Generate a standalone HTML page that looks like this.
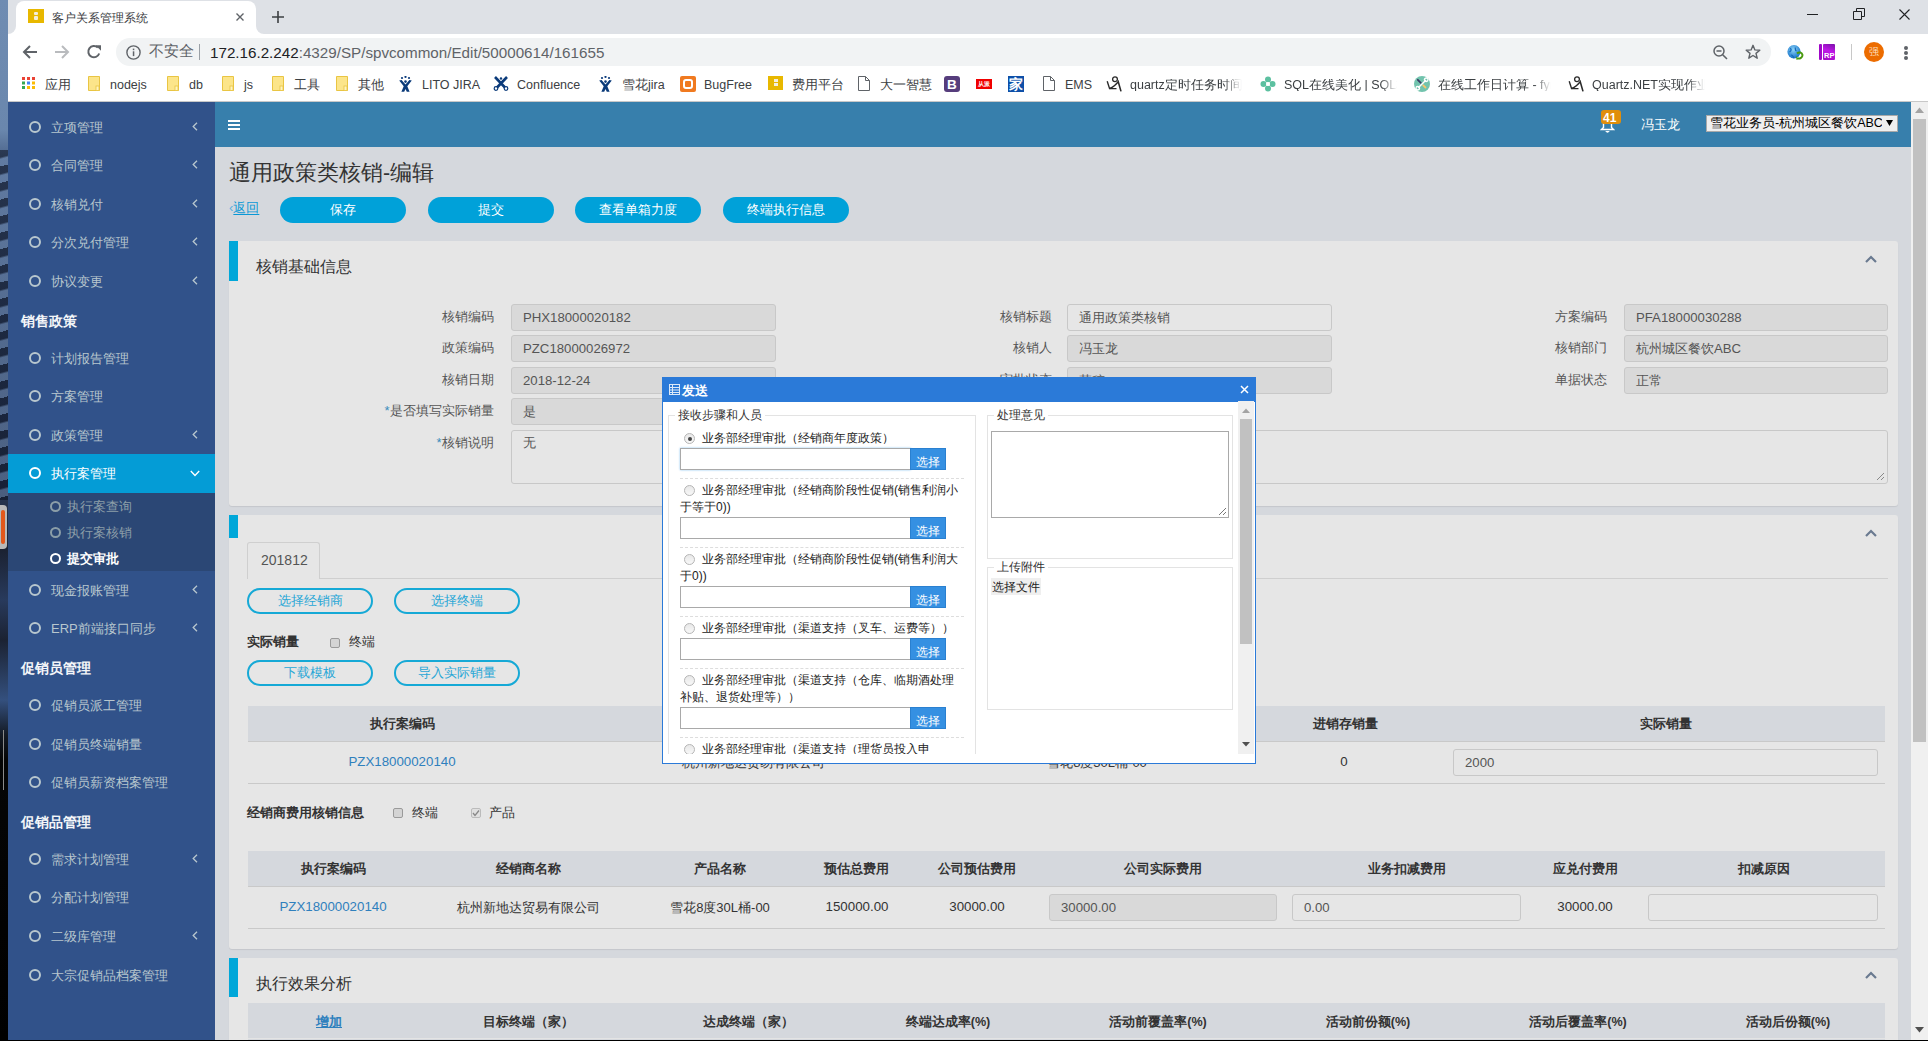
<!DOCTYPE html>
<html><head><meta charset="utf-8">
<style>
*{box-sizing:border-box;margin:0;padding:0}
html,body{width:1928px;height:1041px;overflow:hidden;background:#000}
body{position:relative;font-family:"Liberation Sans",sans-serif;color:#333}
.a{position:absolute}
.t{position:absolute;white-space:nowrap;line-height:1}
/* desktop */
#desk{left:0;top:0;width:8px;height:1041px;background:linear-gradient(180deg,#6f8cb2 0px,#6a87ad 130px,#4a6288 160px,#34486a 330px,#2a3a58 480px,#1b2232 550px,#283a5c 600px,#1b2232 640px,#34507e 700px,#141a24 735px,#050505 760px,#000 1041px)}
/* chrome */
#tabs{left:8px;top:0;width:1920px;height:34px;background:#dee1e6}
#tab{left:16px;top:1px;width:240px;height:33px;background:#fff;border-radius:8px 8px 0 0}
#flL{left:8px;top:26px;width:8px;height:8px;background:#fff}
#flL div{width:8px;height:8px;background:#dee1e6;border-bottom-right-radius:8px}
#flR{left:256px;top:26px;width:8px;height:8px;background:#fff}
#flR div{width:8px;height:8px;background:#dee1e6;border-bottom-left-radius:8px}
#toolbar{left:8px;top:34px;width:1920px;height:67px;background:#fff}
#sep{left:8px;top:101px;width:1920px;height:1px;background:#c8c8c8}
#omni{left:116px;top:38px;width:1655px;height:28px;background:#f1f3f4;border-radius:14px}
.bm{font-size:12.5px;color:#3c4043;top:78.5px}
/* page */
#page{left:8px;top:102px;width:1920px;height:938px;background:#d5d8dd;overflow:hidden}
#sidebar{left:8px;top:102px;width:207px;height:938px;background:#31528a}
#header{left:215px;top:102px;width:1696px;height:45px;background:#377fac}
#vscroll{left:1911px;top:102px;width:17px;height:938px;background:#f0f0f0}
#bottomline{left:0;top:1040px;width:1928px;height:1px;background:#000}

.panel{position:absolute;left:229px;width:1669px;background:#e6e6e6;border-radius:3px;box-shadow:0 1px 1px rgba(0,0,0,.08)}
.acc{position:absolute;left:229px;width:9px;background:#00a7d9}
.ptitle{position:absolute;white-space:nowrap;line-height:1;font-size:16px;color:#333}
.pbtn{position:absolute;top:197px;width:126px;height:26px;border-radius:13px;background:#00a1d9;color:#fff;font-size:13px;text-align:center;line-height:25.5px}
.lbl{position:absolute;white-space:nowrap;line-height:1;font-size:13px;color:#555;text-align:right}
.inp{position:absolute;height:27px;border:1px solid #c8c8c8;border-radius:3px;background:#d9d9d9;font-size:13.2px;color:#555;padding-left:11px;line-height:25px;white-space:nowrap}
.inpw{background:#e6e6e6}
.obtn{position:absolute;width:126px;height:26px;border:2px solid #16a9d6;border-radius:13px;color:#28a6d6;font-size:13px;text-align:center;line-height:22px}
.th{position:absolute;height:36px;background:#d5d8dd}
.thx{margin-top:1.5px;position:absolute;white-space:nowrap;line-height:1;font-size:12.6px;font-weight:bold;color:#333;transform:translateX(-50%)}
.tdx{position:absolute;white-space:nowrap;line-height:1;font-size:13.3px;color:#333;transform:translateX(-50%)}
.hl{position:absolute;height:1px;background:#c9c9c9}
.chev{position:absolute}

.mfs{position:absolute;border:1px solid #e3e3e3}
.mleg{position:absolute;white-space:nowrap;line-height:1;font-size:12px;color:#333;background:#fff;padding:0 3px}
.rad{position:absolute;left:684px;width:11px;height:11px;border-radius:50%;border:1px solid #b5b5b5;background:linear-gradient(#e8e8e8,#f8f8f8)}
.mtx{position:absolute;white-space:nowrap;line-height:1;font-size:12px;color:#222}
.minp{position:absolute;left:680px;width:231px;height:22px;border:1px solid #a9a9a9;background:#fff}
.msel{position:absolute;left:910px;width:36px;height:22px;background:#3590e2;color:#fff;font-size:12px;line-height:1;text-align:center;padding-top:7px;border:1px solid #2a80d0}
.mdash{position:absolute;left:680px;width:284px;height:0;border-top:1px dashed #ddd}
</style></head><body>
<div id="desk" class="a"></div>
<div class="a" style="left:0;top:150px;width:8px;height:350px;background:repeating-linear-gradient(165deg,rgba(10,15,30,.55) 0px,rgba(10,15,30,.55) 7px,rgba(140,170,210,.35) 9px,rgba(140,170,210,.35) 16px)"></div>
<div class="a" style="left:0;top:505px;width:7px;height:44px;background:#b9b9b9;border-radius:0 4px 4px 0"></div>
<div class="a" style="left:1px;top:510px;width:4px;height:34px;background:#e2581c;border-radius:2px"></div>
<div class="a" style="left:3px;top:730px;width:1px;height:60px;background:#8a8a8a"></div>

<div id="tabs" class="a"></div>
<div id="tab" class="a"></div><div id="flL" class="a"><div></div></div><div id="flR" class="a"><div></div></div>
<div id="toolbar" class="a"></div>
<div id="sep" class="a"></div>
<div id="omni" class="a"></div>

<!-- tab contents -->
<div class="a" style="left:28px;top:9px;width:16px;height:14px;background:#e8b800"></div>
<div class="a" style="left:34px;top:11.5px;width:4px;height:3.5px;background:#f4eedd;border-radius:1px"></div><div class="a" style="left:34px;top:16px;width:4px;height:3.5px;background:#f4eedd;border-radius:1px"></div>
<div class="t" style="left:52px;top:12px;font-size:12px;color:#3c4043">客户关系管理系统</div>
<svg class="a" style="left:236px;top:13px" width="8" height="8" viewBox="0 0 8 8"><path d="M0.5 0.5L7.5 7.5M7.5 0.5L0.5 7.5" stroke="#5f6368" stroke-width="1.4"/></svg>
<svg class="a" style="left:272px;top:11px" width="12" height="12" viewBox="0 0 12 12"><path d="M6 0V12M0 6H12" stroke="#3c4043" stroke-width="1.6"/></svg>
<!-- window controls -->
<div class="a" style="left:1807px;top:14px;width:11px;height:1px;background:#202124"></div>
<svg class="a" style="left:1853px;top:8px" width="12" height="12" viewBox="0 0 12 12"><path d="M0.5 3.5H8.5V11.5H0.5Z M3.5 3.5V0.5H11.5V8.5H8.5" fill="none" stroke="#202124" stroke-width="1"/></svg>
<svg class="a" style="left:1899px;top:9px" width="11" height="11" viewBox="0 0 11 11"><path d="M0.5 0.5L10.5 10.5M10.5 0.5L0.5 10.5" stroke="#202124" stroke-width="1.1"/></svg>
<!-- nav -->
<svg class="a" style="left:22px;top:44px" width="16" height="16" viewBox="0 0 16 16"><path d="M15 8H2M8 2L2 8L8 14" fill="none" stroke="#5f6368" stroke-width="2"/></svg>
<svg class="a" style="left:54px;top:44px" width="16" height="16" viewBox="0 0 16 16"><path d="M1 8H14M8 2L14 8L8 14" fill="none" stroke="#b9bbbe" stroke-width="2"/></svg>
<svg class="a" style="left:86px;top:44px" width="16" height="16" viewBox="0 0 16 16"><path d="M13.2 9.5A5.6 5.6 0 1 1 11.8 3.6" fill="none" stroke="#5f6368" stroke-width="2"/><path d="M9.5 1.2H15V6.7Z" fill="#5f6368"/></svg>
<!-- omnibox -->
<svg class="a" style="left:126px;top:45px" width="15" height="15" viewBox="0 0 15 15"><circle cx="7.5" cy="7.5" r="6.6" fill="none" stroke="#5f6368" stroke-width="1.4"/><rect x="6.8" y="6.3" width="1.5" height="4.8" fill="#5f6368"/><rect x="6.8" y="3.6" width="1.5" height="1.6" fill="#5f6368"/></svg>
<div class="t" style="left:149px;top:44px;font-size:14.5px;color:#5f6368">不安全</div>
<div class="a" style="left:199px;top:44px;width:1px;height:16px;background:#9aa0a6"></div>
<div class="t" style="left:210px;top:44.5px;font-size:15.2px;color:#202124">172.16.2.242<span style="color:#5f6368">:4329/SP/spvcommon/Edit/50000614/161655</span></div>
<svg class="a" style="left:1713px;top:45px" width="15" height="15" viewBox="0 0 15 15"><circle cx="6" cy="6" r="5" fill="none" stroke="#5f6368" stroke-width="1.5"/><path d="M3.5 6H8.5M9.7 9.7L14 14" stroke="#5f6368" stroke-width="1.6"/></svg>
<svg class="a" style="left:1745px;top:44px" width="16" height="16" viewBox="0 0 16 16"><path d="M8 1.3L9.9 5.9L14.8 6.2L11 9.4L12.2 14.2L8 11.5L3.8 14.2L5 9.4L1.2 6.2L6.1 5.9Z" fill="none" stroke="#5f6368" stroke-width="1.4" stroke-linejoin="round"/></svg>
<!-- extensions -->
<svg class="a" style="left:1787px;top:45px" width="17" height="15" viewBox="0 0 17 15"><defs><radialGradient id="gg" cx="0.45" cy="0.35" r="0.6"><stop offset="0" stop-color="#8fd4f8"/><stop offset="1" stop-color="#1a78cc"/></radialGradient></defs><ellipse cx="7" cy="6.8" rx="6.6" ry="6.8" fill="url(#gg)"/><path d="M3 3.5C5 4 4 6 2.5 7M8 2.5C9 4 7.5 5 9.5 6M4 10C6 10 6 12 7 13" stroke="#1468b8" stroke-width="1.2" fill="none"/><path d="M10 8.5C12 6.5 15 7.5 15.5 10C15.5 12.5 13 14 10.5 13.5" fill="none" stroke="#4a9a10" stroke-width="2"/><path d="M9 11L11.5 13.8L9.5 15Z" fill="#4a9a10"/></svg>
<div class="a" style="left:1819px;top:44px;width:3px;height:16px;background:#a008c8;border-radius:1px"></div><div class="a" style="left:1823px;top:44px;width:12px;height:16px;background:linear-gradient(200deg,#7a10a8 0%,#c018e8 45%,#a008c0 100%);border-radius:1px"></div>
<div class="t" style="left:1824px;top:52px;font-size:7.5px;font-weight:bold;color:#fff">RP</div>
<div class="a" style="left:1851px;top:44px;width:1px;height:16px;background:#c8c8c8"></div>
<div class="a" style="left:1864px;top:42px;width:20px;height:20px;border-radius:50%;background:#ec6c00"></div>
<div class="t" style="left:1869px;top:47px;font-size:10px;color:#fde0c0">强</div>
<div class="a" style="left:1904px;top:46px;width:4px;height:4px;border-radius:50%;background:#5f6368"></div>
<div class="a" style="left:1904px;top:51px;width:4px;height:4px;border-radius:50%;background:#5f6368"></div>
<div class="a" style="left:1904px;top:56px;width:4px;height:4px;border-radius:50%;background:#5f6368"></div>
<!-- bookmarks -->
<svg class="a" style="left:22px;top:77px" width="14" height="12" viewBox="0 0 14 12"><rect x="0" y="0" width="3" height="3" fill="#ea4335"/><rect x="5" y="0" width="3" height="3" fill="#ea4335"/><rect x="10" y="0" width="3" height="3" fill="#ea4335"/><rect x="0" y="4.5" width="3" height="3" fill="#34a853"/><rect x="5" y="4.5" width="3" height="3" fill="#4285f4"/><rect x="10" y="4.5" width="3" height="3" fill="#fbbc05"/><rect x="0" y="9" width="3" height="3" fill="#34a853"/><rect x="5" y="9" width="3" height="3" fill="#fbbc05"/><rect x="10" y="9" width="3" height="3" fill="#fbbc05"/></svg>
<div class="t bm" style="left:45px">应用</div>
<svg class="a" style="left:88px;top:76px" width="12" height="15" viewBox="0 0 12 15"><path d="M0.5 0.5H11.5V14.5H0.5Z" fill="#fce58a" stroke="#e9c543"/><rect x="8" y="10" width="3" height="4.5" fill="#fff4c0" stroke="#e9c543" stroke-width="0.8"/></svg>
<div class="t bm" style="left:110px">nodejs</div>
<svg class="a" style="left:167px;top:76px" width="12" height="15" viewBox="0 0 12 15"><path d="M0.5 0.5H11.5V14.5H0.5Z" fill="#fce58a" stroke="#e9c543"/><rect x="8" y="10" width="3" height="4.5" fill="#fff4c0" stroke="#e9c543" stroke-width="0.8"/></svg>
<div class="t bm" style="left:189px">db</div>
<svg class="a" style="left:222px;top:76px" width="12" height="15" viewBox="0 0 12 15"><path d="M0.5 0.5H11.5V14.5H0.5Z" fill="#fce58a" stroke="#e9c543"/><rect x="8" y="10" width="3" height="4.5" fill="#fff4c0" stroke="#e9c543" stroke-width="0.8"/></svg>
<div class="t bm" style="left:244px">js</div>
<svg class="a" style="left:272px;top:76px" width="12" height="15" viewBox="0 0 12 15"><path d="M0.5 0.5H11.5V14.5H0.5Z" fill="#fce58a" stroke="#e9c543"/><rect x="8" y="10" width="3" height="4.5" fill="#fff4c0" stroke="#e9c543" stroke-width="0.8"/></svg>
<div class="t bm" style="left:294px">工具</div>
<svg class="a" style="left:336px;top:76px" width="12" height="15" viewBox="0 0 12 15"><path d="M0.5 0.5H11.5V14.5H0.5Z" fill="#fce58a" stroke="#e9c543"/><rect x="8" y="10" width="3" height="4.5" fill="#fff4c0" stroke="#e9c543" stroke-width="0.8"/></svg>
<div class="t bm" style="left:358px">其他</div>

<svg class="a" style="left:399px;top:76px" width="13" height="16" viewBox="0 0 13 16"><g fill="#0a3a7a"><circle cx="3" cy="2" r="1.1"/><circle cx="6.5" cy="0.9" r="1.1"/><circle cx="10" cy="2" r="1.1"/><circle cx="6.5" cy="5.6" r="1.3"/><path d="M0.2 4.5L2.6 4L6.5 8.6L10.4 4L12.8 4.5L8.3 10.2L10.6 15.8H7.8L6.5 13L5.2 15.8H2.4L4.7 10.2Z"/></g></svg>
<div class="t bm" style="left:422px">LITO JIRA</div>
<svg class="a" style="left:493px;top:76px" width="16" height="15" viewBox="0 0 16 15"><g fill="none" stroke="#0a3a7a"><path d="M2 1L12 11.5M14 1L4 11.5" stroke-width="2.6"/><circle cx="3" cy="12.5" r="1.8" stroke-width="1.2"/><circle cx="13" cy="12.5" r="1.8" stroke-width="1.2"/></g><circle cx="8" cy="2.5" r="1.2" fill="#0a3a7a"/></svg>
<div class="t bm" style="left:517px">Confluence</div>
<svg class="a" style="left:599px;top:76px" width="13" height="16" viewBox="0 0 13 16"><g fill="#0a3a7a"><circle cx="3" cy="2" r="1.1"/><circle cx="6.5" cy="0.9" r="1.1"/><circle cx="10" cy="2" r="1.1"/><circle cx="6.5" cy="5.6" r="1.3"/><path d="M0.2 4.5L2.6 4L6.5 8.6L10.4 4L12.8 4.5L8.3 10.2L10.6 15.8H7.8L6.5 13L5.2 15.8H2.4L4.7 10.2Z"/></g></svg>
<div class="t bm" style="left:622px">雪花jira</div>
<div class="a" style="left:680px;top:76px;width:16px;height:16px;background:#f07a20;border-radius:2px"></div>
<div class="a" style="left:683px;top:79px;width:10px;height:10px;border:2px solid #fff;border-radius:3px"></div>
<div class="t bm" style="left:704px">BugFree</div>
<div class="a" style="left:768px;top:76px;width:15px;height:14px;background:#e8b800"></div><div class="a" style="left:774px;top:79px;width:3.5px;height:3px;background:#f4eedd"></div><div class="a" style="left:774px;top:83px;width:3.5px;height:3px;background:#f4eedd"></div>
<div class="t bm" style="left:792px">费用平台</div>
<svg class="a" style="left:858px;top:76px" width="12" height="15" viewBox="0 0 12 15"><path d="M0.5 0.5H7.5L11.5 4.5V14.5H0.5Z M7.5 0.5V4.5H11.5" fill="#fff" stroke="#5f6368"/></svg>
<div class="t bm" style="left:880px">大一智慧</div>
<div class="a" style="left:944px;top:76px;width:16px;height:16px;background:#563d7c;border-radius:3px"></div>
<div class="t" style="left:947px;top:78px;font-size:13.5px;font-weight:bold;color:#fff">B</div>
<div class="a" style="left:976px;top:79px;width:16px;height:10px;background:#f00000"></div><div class="t" style="left:978px;top:80.5px;font-size:6px;font-weight:bold;color:#fff">从派</div>
<div class="a" style="left:1008px;top:76px;width:16px;height:16px;background:#0d4fa8"></div>
<div class="t" style="left:1009px;top:77px;font-size:14px;font-weight:bold;color:#fff">家</div>
<svg class="a" style="left:1043px;top:76px" width="12" height="15" viewBox="0 0 12 15"><path d="M0.5 0.5H7.5L11.5 4.5V14.5H0.5Z M7.5 0.5V4.5H11.5" fill="#fff" stroke="#5f6368"/></svg>
<div class="t bm" style="left:1065px">EMS</div>
<svg class="a" style="left:1106px;top:76px" width="16" height="16" viewBox="0 0 16 16"><g fill="none" stroke="#2a2a2a"><circle cx="9" cy="3.2" r="2.4" stroke-width="1.3"/><path d="M1.2 5.2L3.6 12.6L10.5 12.6" stroke-width="1.4"/><path d="M3.6 12.4C7 11.2 10 8.8 12.2 5.6L15 15.4" stroke-width="1.6"/></g></svg>
<div class="t bm" style="left:1130px;width:112px;overflow:hidden;-webkit-mask-image:linear-gradient(90deg,#000 85%,transparent)">quartz定时任务时间表达</div>
<svg class="a" style="left:1260px;top:76px" width="16" height="16" viewBox="0 0 16 16"><g fill="#5cc0a0"><circle cx="8" cy="3.5" r="3"/><circle cx="8" cy="12.5" r="3"/><circle cx="3.5" cy="8" r="3"/><circle cx="12.5" cy="8" r="3"/></g><circle cx="8" cy="8" r="2" fill="#fff"/></svg>
<div class="t bm" style="left:1284px;width:113px;overflow:hidden;-webkit-mask-image:linear-gradient(90deg,#000 85%,transparent)">SQL在线美化 | SQL格式化</div>
<svg class="a" style="left:1414px;top:76px" width="16" height="16" viewBox="0 0 16 16"><circle cx="8" cy="8" r="8" fill="#72c3ad"/><path d="M3.8 3.8L6.8 6.8" stroke="#3a3a66" stroke-width="1.8" stroke-linecap="round"/><path d="M8.8 8.8L12 12" stroke="#f7c56b" stroke-width="1.8"/><path d="M4 12L12 4" stroke="#fff" stroke-width="1.5"/><circle cx="12.2" cy="3.8" r="1.8" fill="none" stroke="#fff" stroke-width="1.3"/><circle cx="3.8" cy="12.2" r="1.8" fill="none" stroke="#fff" stroke-width="1.3"/></svg>
<div class="t bm" style="left:1438px;width:113px;overflow:hidden;-webkit-mask-image:linear-gradient(90deg,#000 85%,transparent)">在线工作日计算 - fynas</div>
<svg class="a" style="left:1568px;top:76px" width="16" height="16" viewBox="0 0 16 16"><g fill="none" stroke="#2a2a2a"><circle cx="9" cy="3.2" r="2.4" stroke-width="1.3"/><path d="M1.2 5.2L3.6 12.6L10.5 12.6" stroke-width="1.4"/><path d="M3.6 12.4C7 11.2 10 8.8 12.2 5.6L15 15.4" stroke-width="1.6"/></g></svg>
<div class="t bm" style="left:1592px;width:113px;overflow:hidden;-webkit-mask-image:linear-gradient(90deg,#000 85%,transparent)">Quartz.NET实现作业调度</div>


<div id="page" class="a"></div>
<div id="sidebar" class="a"></div>

<div class="t" style="left:229px;top:163px;font-size:21.5px;color:#333">通用政策类核销-编辑</div>
<div class="t" style="left:229px;top:200px;font-size:13px;color:#0a98d6;line-height:15px"><span style="color:#5ab0e0">‹</span><span style="text-decoration:underline;text-underline-offset:2px;text-decoration-thickness:1.3px">返回</span></div>
<div class="pbtn" style="left:280px">保存</div>
<div class="pbtn" style="left:428px">提交</div>
<div class="pbtn" style="left:575px">查看单箱力度</div>
<div class="pbtn" style="left:723px">终端执行信息</div>

<!-- panel 1 -->
<div class="panel" style="top:241px;height:265px"></div>
<div class="acc" style="top:241px;height:40px"></div>
<div class="ptitle" style="left:256px;top:259px">核销基础信息</div>
<svg class="chev" style="left:1865px;top:255px" width="12" height="8" viewBox="0 0 12 8"><path d="M1 7L6 2L11 7" fill="none" stroke="#6a7a90" stroke-width="2.2"/></svg>

<div class="lbl" style="right:1434.5px;top:310px">核销编码</div>
<div class="inp" style="left:511px;top:304px;width:265px">PHX18000020182</div>
<div class="lbl" style="right:1434.5px;top:341px">政策编码</div>
<div class="inp" style="left:511px;top:335px;width:265px">PZC18000026972</div>
<div class="lbl" style="right:1434.5px;top:373px">核销日期</div>
<div class="inp" style="left:511px;top:367px;width:265px">2018-12-24</div>
<div class="lbl" style="right:1434.5px;top:404px"><span style="color:#3c8dbc">*</span>是否填写实际销量</div>
<div class="inp" style="left:511px;top:398px;width:265px">是</div>
<div class="lbl" style="right:1434.5px;top:436px"><span style="color:#3c8dbc">*</span>核销说明</div>
<div class="inp inpw" style="left:511px;top:430px;width:1377px;height:54px;line-height:24px">无</div>
<svg class="a" style="left:1876px;top:472px" width="9" height="9" viewBox="0 0 9 9"><path d="M8 1L1 8M8 5L5 8" stroke="#888" stroke-width="1"/></svg>

<div class="lbl" style="right:876.5px;top:310px">核销标题</div>
<div class="inp inpw" style="left:1067px;top:304px;width:265px">通用政策类核销</div>
<div class="lbl" style="right:876.5px;top:341px">核销人</div>
<div class="inp" style="left:1067px;top:335px;width:265px">冯玉龙</div>
<div class="lbl" style="right:876.5px;top:373px">审批状态</div>
<div class="inp" style="left:1067px;top:367px;width:265px">草稿</div>

<div class="lbl" style="right:321px;top:310px">方案编码</div>
<div class="inp" style="left:1624px;top:304px;width:264px">PFA18000030288</div>
<div class="lbl" style="right:321px;top:341px">核销部门</div>
<div class="inp" style="left:1624px;top:335px;width:264px">杭州城区餐饮ABC</div>
<div class="lbl" style="right:321px;top:373px">单据状态</div>
<div class="inp" style="left:1624px;top:367px;width:264px">正常</div>

<!-- panel 2 -->
<div class="panel" style="top:515px;height:434px"></div>
<div class="acc" style="top:515px;height:23px"></div>
<svg class="chev" style="left:1865px;top:529px" width="12" height="8" viewBox="0 0 12 8"><path d="M1 7L6 2L11 7" fill="none" stroke="#6a7a90" stroke-width="2.2"/></svg>
<div class="a" style="left:247px;top:542px;width:73px;height:37px;border:1px solid #cfcfcf;border-bottom:none;border-radius:3px 3px 0 0;background:#e6e6e6"></div>
<div class="t" style="left:261px;top:553px;font-size:14px;color:#555">201812</div>
<div class="hl" style="left:320px;top:578px;width:1568px;background:#cfcfcf"></div>
<div class="obtn" style="left:247px;top:588px">选择经销商</div>
<div class="obtn" style="left:394px;top:588px">选择终端</div>
<div class="t" style="left:247px;top:635px;font-size:13px;font-weight:bold;color:#333">实际销量</div>
<div class="a" style="left:330px;top:638px;width:10px;height:10px;border:1px solid #9a9a9a;border-radius:2px;background:#d4d4d4"></div>
<div class="t" style="left:349px;top:635px;font-size:13px;color:#333">终端</div>
<div class="obtn" style="left:247px;top:660px">下载模板</div>
<div class="obtn" style="left:394px;top:660px">导入实际销量</div>

<div class="th" style="left:248px;top:706px;width:1637px"></div>
<div class="thx" style="left:402px;top:716px">执行案编码</div>
<div class="thx" style="left:752px;top:716px">经销商名称</div>
<div class="thx" style="left:1096px;top:716px">产品名称</div>
<div class="thx" style="left:1345px;top:716px">进销存销量</div>
<div class="thx" style="left:1666px;top:716px">实际销量</div>
<div class="hl" style="left:248px;top:741px;width:1637px"></div>
<div class="tdx" style="left:402px;top:755px;color:#2f80bd">PZX18000020140</div>
<div class="tdx" style="left:753px;top:756px;font-size:13px">杭州新地达贸易有限公司</div>
<div class="tdx" style="left:1097px;top:756px;font-size:13px">雪花8度30L桶-00</div>
<div class="tdx" style="left:1344px;top:755px">0</div>
<div class="inp inpw" style="left:1453px;top:749px;width:425px;height:27px">2000</div>
<div class="hl" style="left:248px;top:783px;width:1637px"></div>

<div class="t" style="left:247px;top:806px;font-size:13px;font-weight:bold;color:#333">经销商费用核销信息</div>
<div class="a" style="left:393px;top:808px;width:10px;height:10px;border:1px solid #9a9a9a;border-radius:2px;background:#d4d4d4"></div>
<div class="t" style="left:412px;top:806px;font-size:13px;color:#333">终端</div>
<div class="a" style="left:471px;top:808px;width:10px;height:10px;border:1px solid #bbb;border-radius:2px;background:#e0e0e0"></div>
<svg class="a" style="left:472px;top:809px" width="8" height="8" viewBox="0 0 8 8"><path d="M1 4L3 6.5L7 1.5" fill="none" stroke="#888" stroke-width="1.3"/></svg>
<div class="t" style="left:489px;top:806px;font-size:13px;color:#333">产品</div>

<div class="th" style="left:248px;top:851px;width:1637px"></div>
<div class="thx" style="left:333px;top:861px">执行案编码</div>
<div class="thx" style="left:528px;top:861px">经销商名称</div>
<div class="thx" style="left:720px;top:861px">产品名称</div>
<div class="thx" style="left:856px;top:861px">预估总费用</div>
<div class="thx" style="left:977px;top:861px">公司预估费用</div>
<div class="thx" style="left:1163px;top:861px">公司实际费用</div>
<div class="thx" style="left:1407px;top:861px">业务扣减费用</div>
<div class="thx" style="left:1585px;top:861px">应兑付费用</div>
<div class="thx" style="left:1764px;top:861px">扣减原因</div>
<div class="hl" style="left:248px;top:886px;width:1637px"></div>
<div class="tdx" style="left:333px;top:900px;color:#2f80bd">PZX18000020140</div>
<div class="tdx" style="left:528px;top:901px;font-size:13px">杭州新地达贸易有限公司</div>
<div class="tdx" style="left:720px;top:901px;font-size:13px">雪花8度30L桶-00</div>
<div class="tdx" style="left:857px;top:900px">150000.00</div>
<div class="tdx" style="left:977px;top:900px">30000.00</div>
<div class="inp" style="left:1049px;top:894px;width:228px;height:27px">30000.00</div>
<div class="inp inpw" style="left:1292px;top:894px;width:229px;height:27px">0.00</div>
<div class="tdx" style="left:1585px;top:900px">30000.00</div>
<div class="inp inpw" style="left:1648px;top:894px;width:230px;height:27px"></div>
<div class="hl" style="left:248px;top:928px;width:1637px"></div>

<!-- panel 3 -->
<div class="panel" style="top:958px;height:120px"></div>
<div class="acc" style="top:958px;height:39px"></div>
<div class="ptitle" style="left:256px;top:976px">执行效果分析</div>
<svg class="chev" style="left:1865px;top:971px" width="12" height="8" viewBox="0 0 12 8"><path d="M1 7L6 2L11 7" fill="none" stroke="#6a7a90" stroke-width="2.2"/></svg>
<div class="th" style="left:248px;top:1003px;width:1637px;height:40px"></div>
<div class="thx" style="left:329px;top:1014px;color:#2f80bd;font-weight:bold;text-decoration:underline">增加</div>
<div class="thx" style="left:528px;top:1014px">目标终端（家）</div>
<div class="thx" style="left:748px;top:1014px">达成终端（家）</div><div class="hl" style="left:248px;top:1038px;width:1637px;background:#e4e4e4"></div>
<div class="thx" style="left:948px;top:1014px">终端达成率(%)</div>
<div class="thx" style="left:1158px;top:1014px">活动前覆盖率(%)</div>
<div class="thx" style="left:1368px;top:1014px">活动前份额(%)</div>
<div class="thx" style="left:1578px;top:1014px">活动后覆盖率(%)</div>
<div class="thx" style="left:1788px;top:1014px">活动后份额(%)</div>
<div id="header" class="a"></div>
<div class="a" style="left:8px;top:454px;width:207px;height:39px;background:#049cd6"></div>
<div class="a" style="left:8px;top:493px;width:207px;height:78px;background:#2b4775"></div>
<div class="a" style="left:29px;top:121px;width:12px;height:12px;border:2.2px solid #b8c7ce;border-radius:50%"></div>
<div class="t" style="left:51px;top:121px;font-size:13px;color:#b8c7ce">立项管理</div>
<svg class="a" style="left:192px;top:122px" width="6" height="9" viewBox="0 0 6 9"><path d="M5 0.8L1.2 4.5L5 8.2" fill="none" stroke="#b8c7ce" stroke-width="1.3"/></svg>
<div class="a" style="left:29px;top:159px;width:12px;height:12px;border:2.2px solid #b8c7ce;border-radius:50%"></div>
<div class="t" style="left:51px;top:159px;font-size:13px;color:#b8c7ce">合同管理</div>
<svg class="a" style="left:192px;top:160px" width="6" height="9" viewBox="0 0 6 9"><path d="M5 0.8L1.2 4.5L5 8.2" fill="none" stroke="#b8c7ce" stroke-width="1.3"/></svg>
<div class="a" style="left:29px;top:198px;width:12px;height:12px;border:2.2px solid #b8c7ce;border-radius:50%"></div>
<div class="t" style="left:51px;top:198px;font-size:13px;color:#b8c7ce">核销兑付</div>
<svg class="a" style="left:192px;top:199px" width="6" height="9" viewBox="0 0 6 9"><path d="M5 0.8L1.2 4.5L5 8.2" fill="none" stroke="#b8c7ce" stroke-width="1.3"/></svg>
<div class="a" style="left:29px;top:236px;width:12px;height:12px;border:2.2px solid #b8c7ce;border-radius:50%"></div>
<div class="t" style="left:51px;top:236px;font-size:13px;color:#b8c7ce">分次兑付管理</div>
<svg class="a" style="left:192px;top:237px" width="6" height="9" viewBox="0 0 6 9"><path d="M5 0.8L1.2 4.5L5 8.2" fill="none" stroke="#b8c7ce" stroke-width="1.3"/></svg>
<div class="a" style="left:29px;top:275px;width:12px;height:12px;border:2.2px solid #b8c7ce;border-radius:50%"></div>
<div class="t" style="left:51px;top:275px;font-size:13px;color:#b8c7ce">协议变更</div>
<svg class="a" style="left:192px;top:276px" width="6" height="9" viewBox="0 0 6 9"><path d="M5 0.8L1.2 4.5L5 8.2" fill="none" stroke="#b8c7ce" stroke-width="1.3"/></svg>
<div class="t" style="left:21px;top:314px;font-size:14px;font-weight:bold;color:#f4f6f9">销售政策</div>
<div class="a" style="left:29px;top:352px;width:12px;height:12px;border:2.2px solid #b8c7ce;border-radius:50%"></div>
<div class="t" style="left:51px;top:352px;font-size:13px;color:#b8c7ce">计划报告管理</div>
<div class="a" style="left:29px;top:390px;width:12px;height:12px;border:2.2px solid #b8c7ce;border-radius:50%"></div>
<div class="t" style="left:51px;top:390px;font-size:13px;color:#b8c7ce">方案管理</div>
<div class="a" style="left:29px;top:429px;width:12px;height:12px;border:2.2px solid #b8c7ce;border-radius:50%"></div>
<div class="t" style="left:51px;top:429px;font-size:13px;color:#b8c7ce">政策管理</div>
<svg class="a" style="left:192px;top:430px" width="6" height="9" viewBox="0 0 6 9"><path d="M5 0.8L1.2 4.5L5 8.2" fill="none" stroke="#b8c7ce" stroke-width="1.3"/></svg>
<div class="a" style="left:29px;top:467px;width:12px;height:12px;border:2.2px solid #fff;border-radius:50%"></div>
<div class="t" style="left:51px;top:467px;font-size:13px;color:#fff">执行案管理</div>
<div class="a" style="left:50px;top:501px;width:11px;height:11px;border:2px solid #8b9ea8;border-radius:50%"></div>
<div class="t" style="left:67px;top:500px;font-size:13px;font-weight:normal;color:#8b9ea8">执行案查询</div>
<div class="a" style="left:50px;top:527px;width:11px;height:11px;border:2px solid #8b9ea8;border-radius:50%"></div>
<div class="t" style="left:67px;top:526px;font-size:13px;font-weight:normal;color:#8b9ea8">执行案核销</div>
<div class="a" style="left:50px;top:553px;width:11px;height:11px;border:2px solid #fff;border-radius:50%"></div>
<div class="t" style="left:67px;top:552px;font-size:13px;font-weight:bold;color:#fff">提交审批</div>
<div class="a" style="left:29px;top:584px;width:12px;height:12px;border:2.2px solid #b8c7ce;border-radius:50%"></div>
<div class="t" style="left:51px;top:584px;font-size:13px;color:#b8c7ce">现金报账管理</div>
<svg class="a" style="left:192px;top:585px" width="6" height="9" viewBox="0 0 6 9"><path d="M5 0.8L1.2 4.5L5 8.2" fill="none" stroke="#b8c7ce" stroke-width="1.3"/></svg>
<div class="a" style="left:29px;top:622px;width:12px;height:12px;border:2.2px solid #b8c7ce;border-radius:50%"></div>
<div class="t" style="left:51px;top:622px;font-size:13px;color:#b8c7ce">ERP前端接口同步</div>
<svg class="a" style="left:192px;top:623px" width="6" height="9" viewBox="0 0 6 9"><path d="M5 0.8L1.2 4.5L5 8.2" fill="none" stroke="#b8c7ce" stroke-width="1.3"/></svg>
<div class="t" style="left:21px;top:661px;font-size:14px;font-weight:bold;color:#f4f6f9">促销员管理</div>
<div class="a" style="left:29px;top:699px;width:12px;height:12px;border:2.2px solid #b8c7ce;border-radius:50%"></div>
<div class="t" style="left:51px;top:699px;font-size:13px;color:#b8c7ce">促销员派工管理</div>
<div class="a" style="left:29px;top:738px;width:12px;height:12px;border:2.2px solid #b8c7ce;border-radius:50%"></div>
<div class="t" style="left:51px;top:738px;font-size:13px;color:#b8c7ce">促销员终端销量</div>
<div class="a" style="left:29px;top:776px;width:12px;height:12px;border:2.2px solid #b8c7ce;border-radius:50%"></div>
<div class="t" style="left:51px;top:776px;font-size:13px;color:#b8c7ce">促销员薪资档案管理</div>
<div class="t" style="left:21px;top:815px;font-size:14px;font-weight:bold;color:#f4f6f9">促销品管理</div>
<div class="a" style="left:29px;top:853px;width:12px;height:12px;border:2.2px solid #b8c7ce;border-radius:50%"></div>
<div class="t" style="left:51px;top:853px;font-size:13px;color:#b8c7ce">需求计划管理</div>
<svg class="a" style="left:192px;top:854px" width="6" height="9" viewBox="0 0 6 9"><path d="M5 0.8L1.2 4.5L5 8.2" fill="none" stroke="#b8c7ce" stroke-width="1.3"/></svg>
<div class="a" style="left:29px;top:891px;width:12px;height:12px;border:2.2px solid #b8c7ce;border-radius:50%"></div>
<div class="t" style="left:51px;top:891px;font-size:13px;color:#b8c7ce">分配计划管理</div>
<div class="a" style="left:29px;top:930px;width:12px;height:12px;border:2.2px solid #b8c7ce;border-radius:50%"></div>
<div class="t" style="left:51px;top:930px;font-size:13px;color:#b8c7ce">二级库管理</div>
<svg class="a" style="left:192px;top:931px" width="6" height="9" viewBox="0 0 6 9"><path d="M5 0.8L1.2 4.5L5 8.2" fill="none" stroke="#b8c7ce" stroke-width="1.3"/></svg>
<div class="a" style="left:29px;top:969px;width:12px;height:12px;border:2.2px solid #b8c7ce;border-radius:50%"></div>
<div class="t" style="left:51px;top:969px;font-size:13px;color:#b8c7ce">大宗促销品档案管理</div>
<svg class="a" style="left:190px;top:470px" width="10" height="7" viewBox="0 0 10 7"><path d="M0.8 1L5 5.5L9.2 1" fill="none" stroke="#fff" stroke-width="1.4"/></svg>

<svg class="a" style="left:228px;top:120px" width="12" height="10" viewBox="0 0 12 10"><rect x="0" y="0" width="12" height="2" fill="#fff"/><rect x="0" y="4" width="12" height="2" fill="#fff"/><rect x="0" y="8" width="12" height="2" fill="#fff"/></svg>
<svg class="a" style="left:1600px;top:118px" width="15" height="15" viewBox="0 0 15 15"><path d="M7.5 1C5 1 3.5 3 3.5 5.5V9.5L1.5 11.5H13.5L11.5 9.5V5.5C11.5 3 10 1 7.5 1Z" fill="none" stroke="#fff" stroke-width="1.4"/><path d="M5.8 13A1.8 1.8 0 0 0 9.2 13" fill="#fff" stroke="#fff"/></svg>
<div class="a" style="left:1601px;top:110px;width:20px;height:14px;background:#e08e0b;border-radius:3px"></div>
<div class="t" style="left:1603px;top:112px;font-size:12px;font-weight:bold;color:#fff">41</div>
<div class="t" style="left:1641px;top:118px;font-size:13px;color:#fff">冯玉龙</div>
<div class="a" style="left:1706px;top:115px;width:192px;height:17px;background:#efefef;border:1px solid #a9a9a9"></div>
<div class="t" style="left:1710px;top:117px;font-size:12.5px;color:#000;width:172px;overflow:hidden">雪花业务员-杭州城区餐饮ABC</div>
<svg class="a" style="left:1886px;top:120px" width="7" height="6" viewBox="0 0 7 6"><path d="M0 0H7L3.5 6Z" fill="#000"/></svg>
<div id="vscroll" class="a"></div>

<!-- modal -->
<div class="a" style="left:662px;top:377px;width:594px;height:387px;background:#fff;border:1px solid #2b7ad8"></div>
<div class="a" style="left:662px;top:377px;width:594px;height:25px;background:#2b7ad8"></div>
<svg class="a" style="left:669px;top:384px" width="11" height="11" viewBox="0 0 11 11"><rect x="0.5" y="0.5" width="10" height="10" fill="none" stroke="#dce9f8"/><path d="M0.5 3.5H10.5M0.5 6H10.5M0.5 8.5H10.5M3.5 0.5V10.5" stroke="#dce9f8" stroke-width="1"/></svg>
<div class="t" style="left:682px;top:384px;font-size:13px;font-weight:bold;color:#fff">发送</div>
<svg class="a" style="left:1240px;top:385px" width="9" height="9" viewBox="0 0 9 9"><path d="M1 1L8 8M8 1L1 8" stroke="#fff" stroke-width="1.5"/></svg>
<!-- content clip -->
<div class="a" style="left:663px;top:401px;width:575px;height:353px;overflow:hidden">
 <div style="position:absolute;left:-663px;top:-401px;width:1928px;height:1041px">
  <div class="mfs" style="left:668px;top:415px;width:308px;height:400px"></div>
  <div class="mleg" style="left:675px;top:409px">接收步骤和人员</div>
  <div class="rad" style="top:433px"><div style="position:absolute;left:2.5px;top:2.5px;width:4px;height:4px;border-radius:50%;background:#444"></div></div>
  <div class="mtx" style="left:702px;top:432px">业务部经理审批（经销商年度政策）</div>
  <div class="minp" style="top:448px;box-shadow:0 0 2px #8ac4f0"></div><div class="msel" style="top:448px">选择</div>
  <div class="mdash" style="top:478px"></div>
  <div class="rad" style="top:485px"></div>
  <div class="mtx" style="left:702px;top:484px">业务部经理审批（经销商阶段性促销(销售利润小</div>
  <div class="mtx" style="left:680px;top:501px">于等于0))</div>
  <div class="minp" style="top:517px"></div><div class="msel" style="top:517px">选择</div>
  <div class="mdash" style="top:547px"></div>
  <div class="rad" style="top:554px"></div>
  <div class="mtx" style="left:702px;top:553px">业务部经理审批（经销商阶段性促销(销售利润大</div>
  <div class="mtx" style="left:680px;top:570px">于0))</div>
  <div class="minp" style="top:586px"></div><div class="msel" style="top:586px">选择</div>
  <div class="mdash" style="top:616px"></div>
  <div class="rad" style="top:623px"></div>
  <div class="mtx" style="left:702px;top:622px">业务部经理审批（渠道支持（叉车、运费等））</div>
  <div class="minp" style="top:638px"></div><div class="msel" style="top:638px">选择</div>
  <div class="mdash" style="top:668px"></div>
  <div class="rad" style="top:675px"></div>
  <div class="mtx" style="left:702px;top:674px">业务部经理审批（渠道支持（仓库、临期酒处理</div>
  <div class="mtx" style="left:680px;top:691px">补贴、退货处理等））</div>
  <div class="minp" style="top:707px"></div><div class="msel" style="top:707px">选择</div>
  <div class="mdash" style="top:737px"></div>
  <div class="rad" style="top:744px"></div>
  <div class="mtx" style="left:702px;top:743px">业务部经理审批（渠道支持（理货员投入申</div>

  <div class="mfs" style="left:987px;top:415px;width:246px;height:144px"></div>
  <div class="mleg" style="left:994px;top:409px">处理意见</div>
  <div class="a" style="left:991px;top:431px;width:238px;height:87px;border:1px solid #a9a9a9;background:#fff"></div>
  <svg class="a" style="left:1218px;top:507px" width="9" height="9" viewBox="0 0 9 9"><path d="M8 1L1 8M8 5L5 8" stroke="#777" stroke-width="1"/></svg>
  <div class="mfs" style="left:987px;top:567px;width:246px;height:143px"></div>
  <div class="mleg" style="left:994px;top:561px">上传附件</div>
  <div class="a" style="left:991px;top:578px;width:50px;height:17px;background:#efefef"></div>
  <div class="mtx" style="left:992px;top:581px;font-size:12px">选择文件</div>
 </div>
</div>
<!-- modal scrollbar -->
<div class="a" style="left:1238px;top:401px;width:16px;height:353px;background:#f0f0f0"></div>
<svg class="a" style="left:1242px;top:408px" width="8" height="5" viewBox="0 0 8 5"><path d="M0 5L4 0.5L8 5Z" fill="#a3a3a3"/></svg>
<div class="a" style="left:1240px;top:419px;width:12px;height:225px;background:#c1c1c1"></div>
<svg class="a" style="left:1242px;top:742px" width="8" height="5" viewBox="0 0 8 5"><path d="M0 0L4 4.5L8 0Z" fill="#505050"/></svg>

<!-- page scrollbar -->
<svg class="a" style="left:1915px;top:107px" width="9" height="6" viewBox="0 0 9 6"><path d="M0 6L4.5 0.5L9 6Z" fill="#a3a3a3"/></svg>
<div class="a" style="left:1913px;top:119px;width:13px;height:623px;background:#c1c1c1"></div>
<svg class="a" style="left:1915px;top:1027px" width="9" height="6" viewBox="0 0 9 6"><path d="M0 0L4.5 5.5L9 0Z" fill="#505050"/></svg>
<div id="bottomline" class="a"></div>
</body></html>
